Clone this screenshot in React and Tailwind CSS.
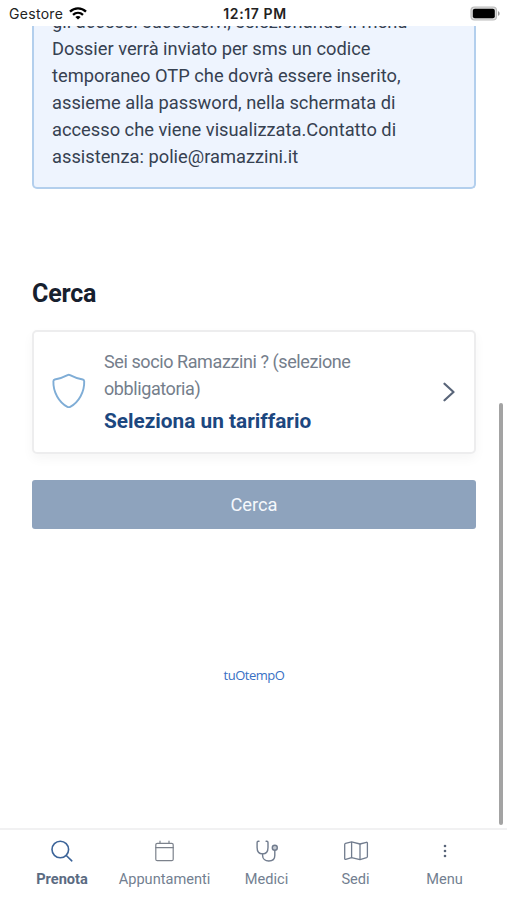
const alertLines = [
	"gli accessi successivi, selezionando il menù",
	"Dossier verrà inviato per sms un codice",
	"temporaneo OTP che dovrà essere inserito,",
	"assieme alla password, nella schermata di",
	"accesso che viene visualizzata.Contatto di",
	"assistenza: polie@ramazzini.it",
];

const WifiIcon = () => (
	<svg width="18" height="13" viewBox="0 0 18 13" fill="none" stroke="#000" strokeWidth="2.3">
		<path d="M1 4.6C5.5.2 12.5.2 17 4.6" />
		<path d="M4 7.9c2.9-2.7 7.1-2.7 10 0" />
		<path d="M9 12.6 6.3 10c1.5-1.4 3.9-1.4 5.4 0z" fill="#000" stroke="none" />
	</svg>
);

const BatteryIcon = () => (
	<svg width="31" height="15" viewBox="0 0 31 15">
		<rect x="1" y="1" width="25.5" height="13" rx="3.5" fill="#ddd" stroke="#bbb" strokeWidth="1.2" />
		<rect x="2.8" y="2.8" width="22" height="9.4" rx="2" fill="#000" />
		<path d="M28 5.2c2.2.7 2.2 3.9 0 4.6z" fill="#999" />
	</svg>
);

const ShieldIcon = () => (
	<svg width="34" height="36" viewBox="0 0 34 36" fill="none" stroke="#7fadd6" strokeWidth="1.9" strokeLinejoin="round" className="relative -top-px">
		<path d="M15.6 2.1Q16.8 1.5 18 2.1C22 4.2 26 5.6 30.800 6.500Q32.200 6.900 32.200 8.200C32.600 19 26.500 29.500 18.200 33.800Q16.800 34.500 15.400 33.800C7.100 29.500 1 19 1.400 8.200Q1.400 6.900 2.800 6.500C7.600 5.600 11.600 4.200 15.600 2.100Z" />
	</svg>
);

const ChevronIcon = () => (
	<svg width="12" height="20" viewBox="0 0 12 20" fill="none" stroke="#596579" strokeWidth="2.2" strokeLinecap="round" strokeLinejoin="round">
		<path d="m1.500 1.700 9 8.300-9 8.300" />
	</svg>
);

const SearchIcon = () => (
	<svg width="24" height="24" viewBox="0 0 24 24" fill="none" stroke="#3c6499" strokeWidth="1.6" strokeLinecap="round">
		<circle cx="10.300" cy="10.500" r="8.300" />
		<path d="m16.300 16.500 5.500 5.300" />
	</svg>
);

const CalendarIcon = () => (
	<svg width="24" height="24" viewBox="0 0 24 24" fill="none" stroke="#7c828c" strokeWidth="1.2" strokeLinecap="round" className="relative -left-px">
		<rect x="3.800" y="4.300" width="17.400" height="17.400" rx="1.500" />
		<path d="M3.800 8.700H21.200M8 2.200v2M17 2.200v2" />
	</svg>
);

const StethoscopeIcon = () => (
	<svg width="24" height="24" viewBox="0 0 24 24" fill="none" stroke="#717c8e" strokeWidth="1.400" strokeLinecap="round">
		<path d="M4 2.300H3.300Q2.100 2.300 2.100 3.500V8.500C2.100 12.700 4.500 14.900 7.600 14.900S13 12.700 13 8.500V3.500Q13 2.300 11.800 2.300H11.100" />
		<path d="M7.600 15V16.500C7.600 20 10.300 22 13.800 22S19.800 20 19.800 16.500V11.500" />
		<circle cx="19.800" cy="8.700" r="2.500" fill="#c6cbd2" />
	</svg>
);

const MapIcon = () => (
	<svg width="26" height="24" viewBox="0 0 26 24" fill="none" stroke="#717c8e" strokeWidth="1.300" strokeLinejoin="round">
		<path d="M1.700 5.500Q1.700 4.600 2.500 4.300L8.600 2.900 17 5 23.400 3.300Q24.400 3.100 24.400 4.100V17.500Q24.400 18.300 23.600 18.600L17 20.600 8.600 18.600 2.700 20.300Q1.700 20.500 1.700 19.600Z" />
		<path d="M8.600 2.900v15.700M17 5v15.600" />
	</svg>
);

const DotsIcon = () => (
	<svg width="24" height="24" viewBox="0 0 24 24" fill="#596579">
		<circle cx="12" cy="7" r="1.300" />
		<circle cx="12" cy="12" r="1.300" />
		<circle cx="12" cy="17" r="1.300" />
	</svg>
);

const navItems = [
	{ label: "Prenota", icon: SearchIcon, width: "w-[86px]", active: true },
	{ label: "Appuntamenti", icon: CalendarIcon, width: "w-[119px]" },
	{ label: "Medici", icon: StethoscopeIcon, width: "w-[85px]" },
	{ label: "Sedi", icon: MapIcon, width: "w-[93px]" },
	{ label: "Menu", icon: DotsIcon, width: "w-[85px]" },
];

const StatusBar = () => (
	<header className="grid grid-cols-3 items-center h-[26px] shrink-0 pl-[9px] pr-[6px] font-['Inter',sans-serif] text-[14px] leading-[20px] text-[#222]">
		<div className="flex items-center gap-[6px]">
			<span className="pt-px tracking-[0.3px]">Gestore</span>
			<WifiIcon />
		</div>
		<span className="pt-px text-center font-semibold tracking-[0.6px] whitespace-nowrap">12:17 PM</span>
		<div className="flex justify-end">
			<BatteryIcon />
		</div>
	</header>
);

const BottomNav = () => (
	<nav className="flex h-[72px] shrink-0 pl-[19px] border-t-2 border-[#f1f1f2] bg-white">
		{navItems.map(({ label, icon: Icon, width, active }) => (
			<button key={label} className={`flex flex-col items-center shrink-0 pt-[9px] ${width}`}>
				<Icon />
				<span
					className={`mt-[6px] text-[14.600px] leading-[20px] whitespace-nowrap ${
						active ? "font-bold text-[#5b6b82]" : "text-[#737f91]"
					}`}
				>
					{label}
				</span>
			</button>
		))}
	</nav>
);

const App = () => {
	return (
		<div className="flex flex-col w-[507px] h-[900px] overflow-hidden bg-white font-['Roboto',sans-serif]">
			<StatusBar />

			{/* Scrolled content */}
			<div className="flex flex-1 min-h-0 overflow-hidden">
				<main className="flex flex-col w-[476px] shrink-0 pl-8">
					{/* Notice, cut off by the status bar */}
					<div className="flex flex-col justify-end h-[163px] shrink-0 overflow-hidden rounded-b-[5px] border-2 border-t-0 border-[#b3cfed] bg-[#eef4fe] pl-[18px] pb-[17px] text-[18.300px] leading-[27px] text-[#364151]">
						{alertLines.map((line) => (
							<p key={line} className="shrink-0 whitespace-nowrap">{line}</p>
						))}
					</div>

					<h2 className="mt-[87px] text-[25px] leading-9 font-bold tracking-[-0.2px] text-[#17202e]">Cerca</h2>

					{/* Fare selector */}
					<button className="flex items-center h-[124px] shrink-0 mt-[18px] pl-[18px] pr-[19px] rounded-[5px] border-2 border-[#ededee] bg-white text-left shadow-[0_5px_12px_rgba(0,0,0,0.04)]">
						<ShieldIcon />
						<div className="flex-1 ml-[18px]">
							<p className="w-[280px] text-[18px] leading-[27px] tracking-[-0.410px] text-[#757e8b]">
								Sei socio Ramazzini ? (selezione
								<br />
								obbligatoria)
							</p>
							<p className="mt-[3px] text-[20.800px] leading-[32px] font-bold text-[#1c477f]">Seleziona un tariffario</p>
						</div>
						<ChevronIcon />
					</button>

					<button className="h-[49px] shrink-0 mt-[26px] pt-px rounded-[3px] bg-[#8ea3bd] text-[18.300px] text-[#f5f8fc]">
						Cerca
					</button>

					<a className="mt-[136px] text-center font-['Open_Sans',sans-serif] text-[13px] leading-[20px] tracking-[-0.5px] text-[#3870c4]">
						tuOtempO
					</a>
				</main>

				{/* Scroll indicator */}
				<div className="w-1 h-[422px] mt-[377px] ml-[23px] rounded-full bg-[#a3a3a3] shrink-0" />
			</div>

			<BottomNav />
		</div>
	);
};

export default App;
